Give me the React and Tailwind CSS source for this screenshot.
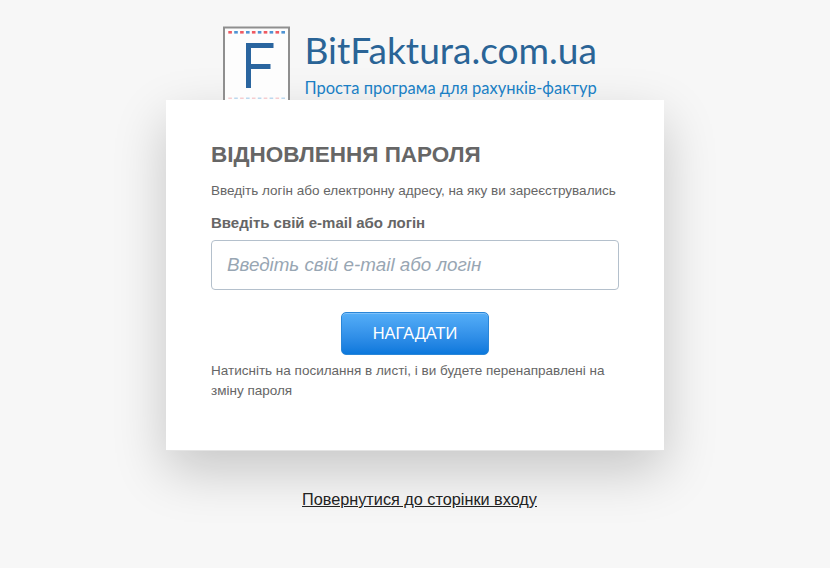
export default function App() {
  return (
    <div className="min-h-[568px] bg-[#f7f7f7] font-['Liberation_Sans',Arial,sans-serif] antialiased overflow-hidden">
      <header className="h-[100px] pt-[26px] overflow-hidden flex justify-center">
        <div className="flex w-[376px] ml-[-9px] gap-[14px] items-start">
          <svg width="68" height="90" viewBox="0 0 68 90" className="shrink-0">
            <rect x="1" y="1.5" width="65" height="88" fill="#fdfdfd" stroke="#8f8f8f" strokeWidth="2" />
            {[5.3, 11.2, 17.1, 23, 28.9, 34.8, 40.7, 46.6, 52.5, 58.4].map((x, i) => (
              <rect key={x} x={x} y="5" width="3.6" height="2.6" fill={i % 2 ? "#4f94d4" : "#ef5a62"} />
            ))}
            <path d="M25.5 62V19.5h25M25.5 40.5h22" fill="none" stroke="#2a659f" strokeWidth="5" />
            {[5.3, 11.2, 17.1, 23, 28.9, 34.8, 40.7, 46.6, 52.5, 58.4].map((x, i) => (
              <rect key={x} x={x} y="71.5" width="3.6" height="1.5" fill={i % 2 ? "#bcd8ee" : "#f5cdd0"} />
            ))}
          </svg>
          <div className="font-['Lato',sans-serif] whitespace-nowrap">
            <div className="text-[37.1px] leading-[46px] text-[#2a6496] mt-px">BitFaktura.com.ua</div>
            <div className="text-[16.5px] leading-[20px] text-[#1a7fc4] mt-[5px]">Проста програма для рахунків-фактур</div>
          </div>
        </div>
      </header>

      <main className="mx-auto w-[498px] h-[351px] border-b border-[#e4e4e4] bg-white px-[45px] pt-[41px] text-[#666] shadow-[0_20px_50px_rgba(0,0,0,0.2)]">
        <h1 className="text-[22.5px] leading-[27px] font-bold text-[#666] uppercase">Відновлення пароля</h1>
        <p className="mt-[13px] text-[13.5px] leading-[20px] whitespace-nowrap">
          Введіть логін або електронну адресу, на яку ви зареєструвались
        </p>
        <label className="block mt-[12px] text-[15px] leading-[20px] font-bold">Введіть свій e-mail або логін</label>
        <input
          readOnly
          placeholder="Введіть свій e-mail або логін"
          className="block mt-[7px] w-full h-[50px] px-[15px] rounded-[4px] border border-[#b4c0cc] bg-white text-[18.8px] italic outline-none placeholder:text-[#98a6b3]"
        />
        <div className="flex justify-center mt-[22px]">
          <button className="w-[148px] h-[43px] rounded-[5px] border border-[#2a86d8] bg-gradient-to-b from-[#55aef8] to-[#0a78dc] text-white text-[16.4px] shadow-[inset_0_1px_0_rgba(255,255,255,0.25)]">
            НАГАДАТИ
          </button>
        </div>
        <p className="mt-[6px] text-[13.5px] leading-[20px]">
          Натисніть на посилання в листі, і ви будете перенаправлені на зміну пароля
        </p>
      </main>

      <div className="flex justify-center mt-[38px] pl-[9px]">
        <a href="#" className="text-[16.25px] leading-[20px] text-[#222] underline">Повернутися до сторінки входу</a>
      </div>
    </div>
  );
}
